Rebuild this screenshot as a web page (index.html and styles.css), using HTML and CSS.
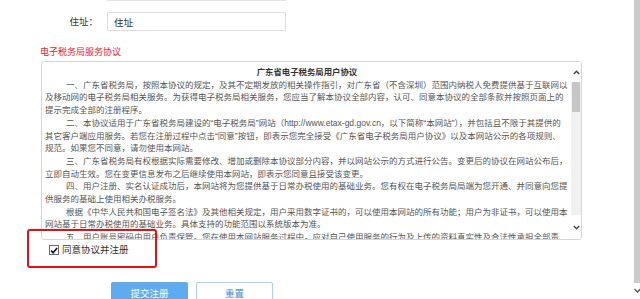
FILE: index.html
```html
<!DOCTYPE html>
<html lang="zh-CN">
<head>
  <meta charset="UTF-8">
  <meta name="viewport" content="width=device-width, initial-scale=1.0">
  <title>电子税务局 用户注册</title>
  <link rel="stylesheet" href="styles.css">
</head>
<body>

  <div class="page">
    <div class="prev-input"></div>

    <div class="form-row">
      <label class="form-label" for="addr">住址：</label>
      <input class="form-input" type="text" id="addr" value="住址">
    </div>

    <div class="agree-title">电子税务局服务协议</div>

    <div class="agree-box">
      <div class="agree-text">
        <h4>广东省电子税务局用户协议</h4>
        <p>一、广东省税务局，按照本协议的规定，及其不定期发放的相关操作指引，对广东省（不含深圳）范围内纳税人免费提供基于互联网以及移动网的电子税务局相关服务。为获得电子税务局相关服务，您应当了解本协议全部内容，认可、同意本协议的全部条款并按照页面上的提示完成全部的注册程序。</p>
        <p>二、本协议适用于广东省税务局建设的“电子税务局”网站（http://www.etax-gd.gov.cn，以下简称“本网站”），并包括且不限于其提供的其它客户端应用服务。若您在注册过程中点击“同意”按钮，即表示您完全接受《广东省电子税务局用户协议》以及本网站公示的各项规则、规范。如果您不同意，请勿使用本网站。</p>
        <p>三、广东省税务局有权根据实际需要修改、增加或删除本协议部分内容，并以网站公示的方式进行公告。变更后的协议在网站公布后，立即自动生效。您在变更信息发布之后继续使用本网站，即表示您同意且接受该变更。</p>
        <p>四、用户注册、实名认证成功后，本网站将为您提供基于日常办税使用的基础业务。您有权在电子税务局局端为您开通、并同意向您提供服务的基础上使用相关办税服务。</p>
        <p>根据《中华人民共和国电子签名法》及其他相关规定，用户采用数字证书的，可以使用本网站的所有功能；用户为非证书，可以使用本网站基于日常办税使用的基础业务。具体支持的功能范围以系统版本为准。</p>
        <p>五、用户账号密码由用户负责保管。您在使用本网站服务过程中，应对自己使用服务的行为及上传的资料真实性及合法性承担全部责任。</p>
      </div>
      <div class="fake-scroll">
        <div class="sb-btn">
          <svg width="7" height="5" viewBox="0 0 7 5"><path d="M0.8 4 L3.5 1.2 L6.2 4" fill="none" stroke="#444" stroke-width="1.4"/></svg>
        </div>
        <div class="sb-track"><div class="sb-thumb"></div></div>
        <div class="sb-btn sb-btn-down">
          <svg width="7" height="5" viewBox="0 0 7 5"><path d="M0.8 1 L3.5 3.8 L6.2 1" fill="none" stroke="#444" stroke-width="1.4"/></svg>
        </div>
      </div>
    </div>

    <div class="agree-check">
      <span class="check-box">
        <svg width="9" height="9" viewBox="0 0 9 9"><path d="M1.3 4.6 L3.5 7 L8 1.6" fill="none" stroke="#111" stroke-width="1.8"/></svg>
      </span>
      <span class="check-text">同意协议并注册</span>
      <div class="mark"></div>
    </div>

    <div class="btn-row">
      <button class="btn btn-primary" type="submit">提交注册</button>
      <button class="btn btn-default" type="reset">重置</button>
    </div>
  </div>

  <div class="page-scroll">
    <div class="page-thumb"></div>
    <div class="page-arrow">
      <svg width="6" height="5" viewBox="0 0 6 5"><path d="M0.5 1 L3.5 4 L6.5 1" fill="none" stroke="#555" stroke-width="1.3"/></svg>
    </div>
  </div>

</body>
</html>
```

FILE: styles.css
```css
body { margin: 0; padding: 0; background: #fff; color: #333; font-family: "Liberation Sans", "Noto Sans CJK SC", sans-serif; }
.page { width: 620px; }

.prev-input { margin-left: 107px; width: 179px; height: 0; border-bottom: 1px solid #e3e3e3; }

.form-row { display: flex; align-items: center; margin-top: 11px; height: 19px; }
.form-label { width: 98px; text-align: right; font-size: 9.5px; line-height: 19px; color: #333; }
.form-input { box-sizing: border-box; margin: 0 0 0 9px; width: 179px; height: 19px; padding: 0 6px; border: 1px solid #dedede; border-radius: 1px; font-family: inherit; font-size: 9.5px; color: #333; outline: none; }

.agree-title { margin: 15px 0 0 40px; font-size: 9px; line-height: 12px; color: #e5262a; }

.agree-box { box-sizing: border-box; display: flex; margin: 3px 0 0 41px; width: 541px; height: 179px; border: 1px solid #d6d6d6; border-radius: 3px; overflow: hidden; }
.agree-text { flex: 1; padding: 4px 2px 0 3px; overflow: hidden; font-size: 8.5px; line-height: 12.7px; color: #555; }
.agree-text h4 { margin: 0; text-align: center; font-size: 8.4px; font-weight: bold; color: #333; }
.agree-text p { margin: 0; text-indent: 21px; }

.fake-scroll { display: flex; flex-direction: column; width: 10px; background: #f1f1f1; }
.sb-btn { display: flex; align-items: center; justify-content: center; height: 20px; background: #fff; }
.sb-btn-down { height: 24px; }
.sb-track { flex: 1; }
.sb-thumb { margin: 0 1px; height: 30px; background: #c6c6c6; }

.agree-check { position: relative; display: flex; align-items: center; margin: 4px 0 0 49px; height: 12px; }
.check-box { box-sizing: border-box; display: flex; align-items: center; justify-content: center; width: 10px; height: 10px; border: 1px solid #666; background: #fff; }
.check-text { margin-left: 3px; font-size: 9.5px; line-height: 12px; color: #333; }
.mark { position: absolute; left: -22px; top: -15px; box-sizing: border-box; width: 130px; height: 39px; border: 2px solid #e60f16; border-radius: 3px; }

.btn-row { display: flex; gap: 8px; margin: 26px 0 0 111px; }
.btn { box-sizing: border-box; width: 77px; height: 22px; padding: 0; border-radius: 2px; font-family: inherit; font-size: 9.5px; cursor: pointer; }
.btn-primary { border: none; background: #5eabf0; color: #fff; }
.btn-default { border: 1px solid #a9cff2; background: #fff; color: #3f8ddb; }

.page-scroll { position: fixed; top: 0; right: 0; display: flex; flex-direction: column; width: 6px; height: 299px; }
.page-thumb { height: 283px; background: #cbcbcb; }
.page-arrow { display: flex; justify-content: center; padding-top: 5px; }
```
